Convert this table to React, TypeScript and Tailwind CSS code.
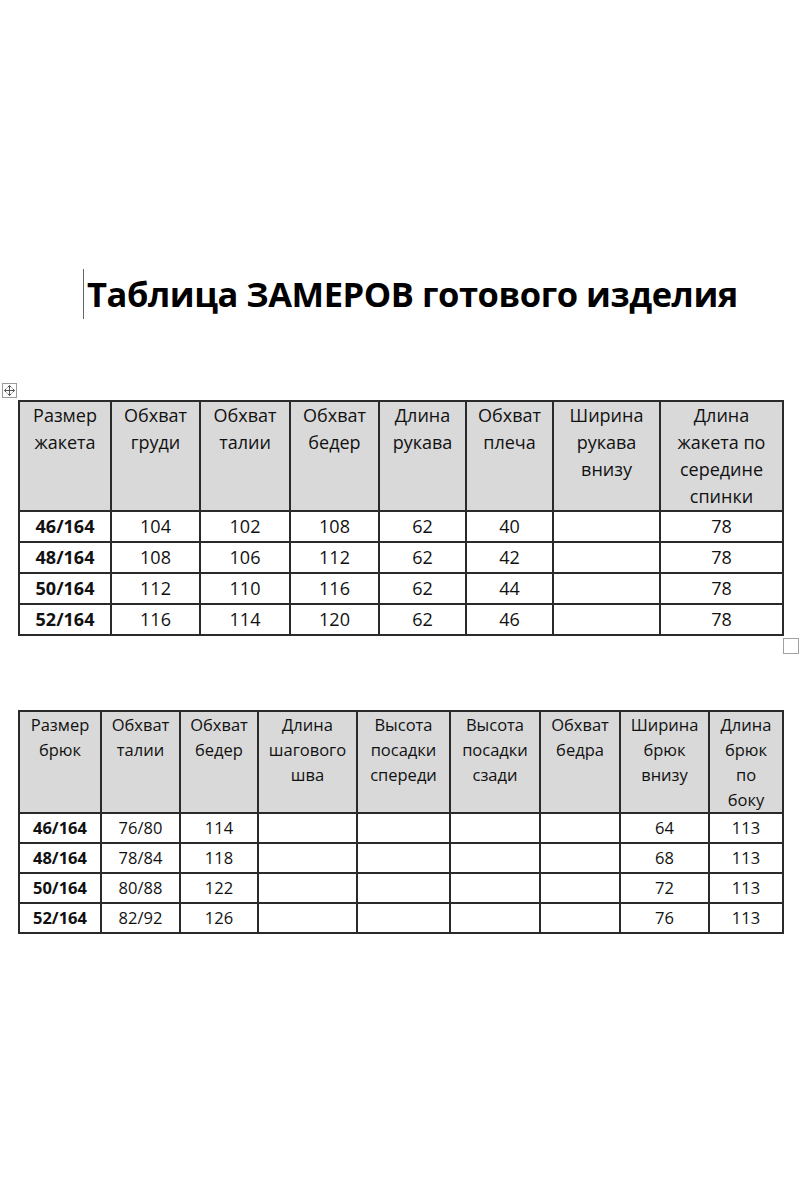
import React from "react"

const jacketHead = [
  "Размер\nжакета",
  "Обхват\nгруди",
  "Обхват\nталии",
  "Обхват\nбедер",
  "Длина\nрукава",
  "Обхват\nплеча",
  "Ширина\nрукава\nвнизу",
  "Длина\nжакета по\nсередине\nспинки",
]

const jacketCols = [92, 89, 90, 89, 87, 87, 107, 123]

const jacketRows = [
  ["46/164", "104", "102", "108", "62", "40", "", "78"],
  ["48/164", "108", "106", "112", "62", "42", "", "78"],
  ["50/164", "112", "110", "116", "62", "44", "", "78"],
  ["52/164", "116", "114", "120", "62", "46", "", "78"],
]

const pantsHead = [
  "Размер\nбрюк",
  "Обхват\nталии",
  "Обхват\nбедер",
  "Длина\nшагового\nшва",
  "Высота\nпосадки\nспереди",
  "Высота\nпосадки\nсзади",
  "Обхват\nбедра",
  "Ширина\nбрюк\nвнизу",
  "Длина\nбрюк\nпо\nбоку",
]

const pantsCols = [82, 79, 78, 99, 93, 90, 80, 89, 74]

const pantsRows = [
  ["46/164", "76/80", "114", "", "", "", "", "64", "113"],
  ["48/164", "78/84", "118", "", "", "", "", "68", "113"],
  ["50/164", "80/88", "122", "", "", "", "", "72", "113"],
  ["52/164", "82/92", "126", "", "", "", "", "76", "113"],
]

function MoveHandle() {
  return (
    <div className="ml-[2px] flex h-[15px] w-[15px] items-center justify-center border border-[#9a9a9a] bg-white">
      <svg width="11" height="11" viewBox="0 0 11 11" fill="none" stroke="#555" strokeWidth="1">
        <path d="M5.5 0.5v10M0.5 5.5h10" />
        <path d="M3.5 2.5l2-2 2 2M3.5 8.5l2 2 2-2M2.5 3.5l-2 2 2 2M8.5 3.5l2 2-2 2" />
      </svg>
    </div>
  )
}

function SizeTable({
  head,
  cols,
  rows,
  headH,
  rowH,
  text,
}: {
  head: string[]
  cols: number[]
  rows: string[][]
  headH: string
  rowH: string
  text: string
}) {
  return (
    <table className={`ml-[18px] table-fixed border-collapse text-[#111] ${text}`}>
      <colgroup>
        {cols.map((w, i) => (
          <col key={i} style={{ width: w }} />
        ))}
      </colgroup>
      <thead>
        <tr className={headH}>
          {head.map((h, i) => (
            <th
              key={i}
              className="whitespace-pre-line border-2 border-[#2a2a2a] bg-[#d9d9d9] p-0 align-top font-normal"
            >
              {h}
            </th>
          ))}
        </tr>
      </thead>
      <tbody>
        {rows.map((r, ri) => (
          <tr key={ri} className={rowH}>
            {r.map((c, ci) => (
              <td
                key={ci}
                className={`border-2 border-[#2a2a2a] p-0 text-center align-middle ${ci === 0 ? "font-bold" : ""}`}
              >
                {c}
              </td>
            ))}
          </tr>
        ))}
      </tbody>
    </table>
  )
}

export default function App() {
  return (
    <div className="h-[1200px] w-[800px] overflow-hidden bg-white font-['Open_Sans',sans-serif]">
      <div className="mt-[269px] flex h-[50px] items-center pl-[83px]">
        <span className="h-[50px] w-px bg-[#666]" />
        <h1 className="pl-[3px] text-[34.5px] font-bold leading-none tracking-[-0.45px] text-black">
          Таблица ЗАМЕРОВ готового изделия
        </h1>
      </div>

      <div className="mt-[64px]">
        <MoveHandle />
      </div>
      <div className="mt-[2px]">
        <SizeTable
          head={jacketHead}
          cols={jacketCols}
          rows={jacketRows}
          headH="h-[110px] leading-[27px]"
          rowH="h-[31px]"
          text="text-[18px]"
        />
      </div>
      <div className="ml-[783px] mt-[2px] h-[16px] w-[16px] border border-[#a0a0a0]" />

      <div className="mt-[56px]">
        <SizeTable
          head={pantsHead}
          cols={pantsCols}
          rows={pantsRows}
          headH="h-[101px] leading-[25px]"
          rowH="h-[30px]"
          text="text-[16.5px]"
        />
      </div>
    </div>
  )
}
